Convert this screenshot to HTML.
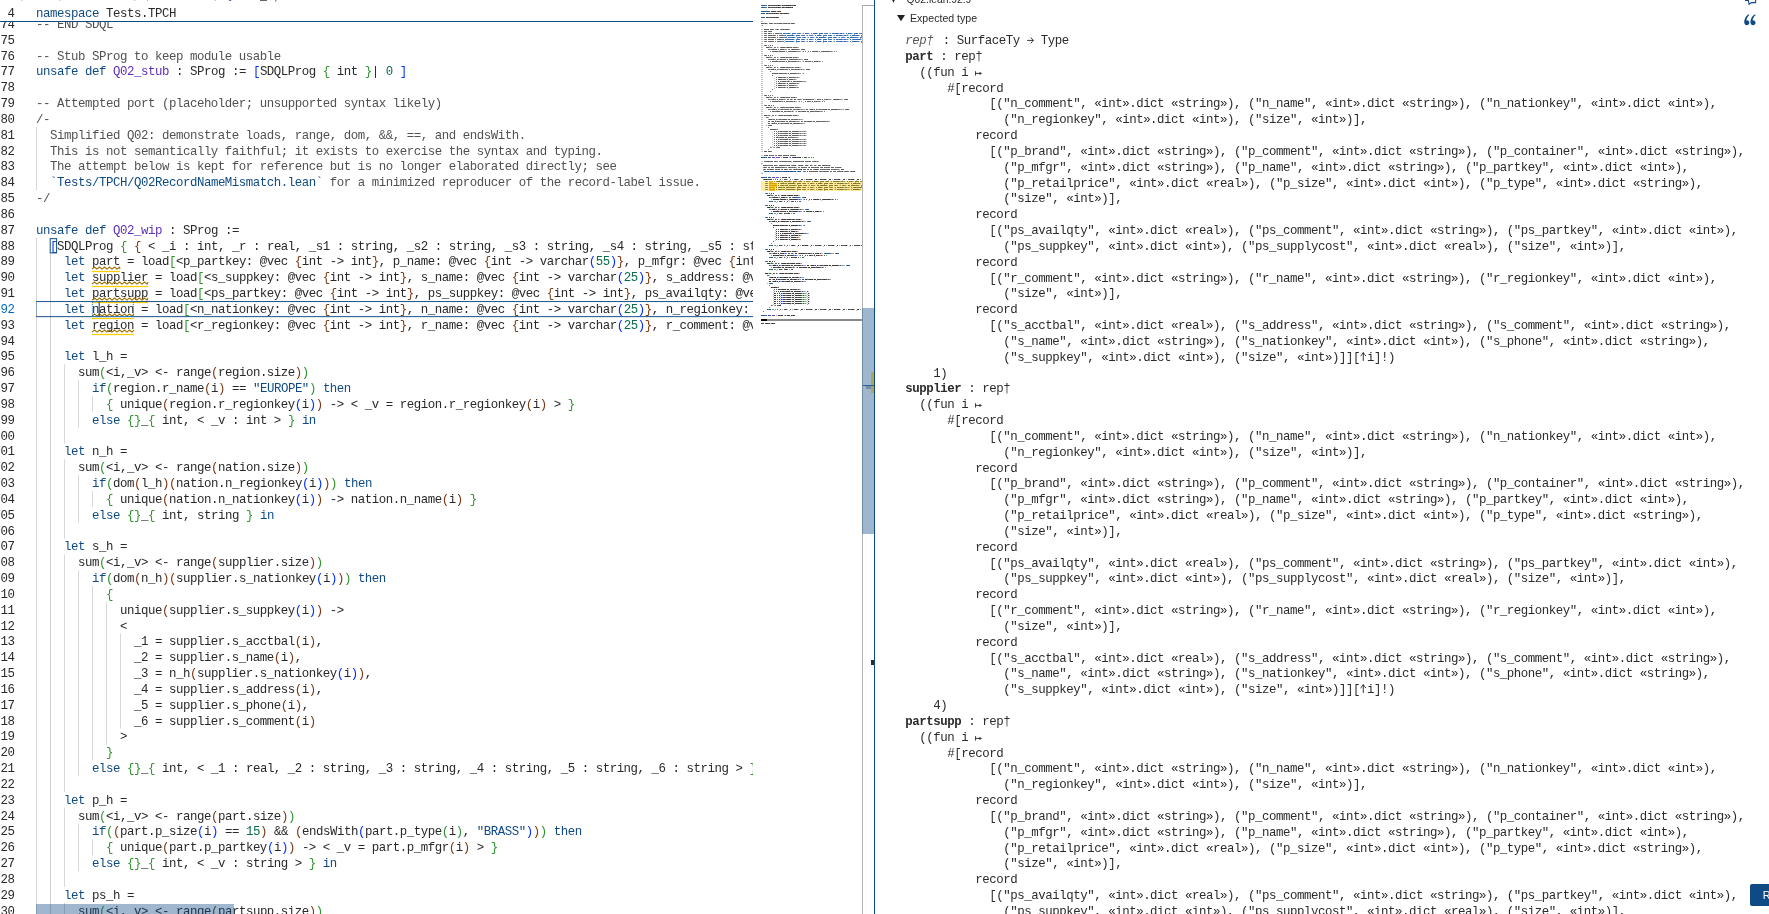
<!DOCTYPE html>
<html><head><meta charset="utf-8"><title>Q02.lean</title>
<style>
html,body{margin:0;padding:0;background:#fff;}
body{width:1769px;height:914px;overflow:hidden;position:relative;font-family:"Liberation Mono",monospace;color:#292929;}
#ed{position:absolute;left:0;top:0;width:752.5px;height:914px;overflow:hidden;will-change:transform;}
.l{position:absolute;left:36.0px;height:15.8333px;line-height:15.8333px;font-size:12.4px;letter-spacing:-0.4406px;white-space:pre;font-family:"Liberation Mono",monospace;color:#292929;}
.n{position:absolute;left:0.5px;height:15.8333px;line-height:15.8333px;font-size:12.4px;letter-spacing:-0.4406px;white-space:pre;color:#292929;}
.g{position:absolute;width:0.85px;background:#c6c6c6;}
.ga{position:absolute;width:0.85px;background:#8c8c8c;}
#info{position:absolute;left:876px;top:0;width:893px;height:914px;overflow:hidden;will-change:transform;}
.i{position:absolute;left:29.3px;height:15.8333px;line-height:15.8333px;font-size:12.4px;letter-spacing:-0.4406px;white-space:pre;color:#2b2b2b;}
.sq{position:absolute;overflow:visible;}
#mm{position:absolute;left:761px;top:5.2px;width:101px;height:330px;overflow:hidden;will-change:transform;}
#mmi{position:absolute;left:0;top:0;transform-origin:0 0;transform:scale(0.142857,0.126316);font-weight:bold;-webkit-text-stroke:1.5px;}
.m{height:15.8333px;line-height:15.8333px;font-size:11.6667px;white-space:pre;color:#000;}
#root{position:absolute;left:0;top:0;width:1769px;height:914px;overflow:hidden;}
</style></head><body><div id="root">

<div id="ed">
<div class="n" style="top:18.00px;color:#292929">74</div>
<div class="l" style="top:18.00px"><span style="color:#515151">-- END SDQL</span></div>
<div class="n" style="top:34.00px;color:#292929">75</div>
<div class="n" style="top:50.00px;color:#292929">76</div>
<div class="l" style="top:50.00px"><span style="color:#515151">-- Stub SProg to keep module usable</span></div>
<div class="n" style="top:65.00px;color:#292929">77</div>
<div class="l" style="top:65.00px"><span style="color:#0F4A85">unsafe def </span><span style="color:#5e2cbc">Q02_stub </span>: SProg := <span style="color:#0431FA">[</span>SDQLProg <span style="color:#319331">{ </span>int <span style="color:#319331">}</span>| <span style="color:#096d48">0 </span><span style="color:#0431FA">]</span></div>
<div class="n" style="top:81.00px;color:#292929">78</div>
<div class="n" style="top:97.00px;color:#292929">79</div>
<div class="l" style="top:97.00px"><span style="color:#515151">-- Attempted port (placeholder; unsupported syntax likely)</span></div>
<div class="n" style="top:113.00px;color:#292929">80</div>
<div class="l" style="top:113.00px"><span style="color:#515151">/-</span></div>
<div class="n" style="top:129.00px;color:#292929">81</div>
<div class="l" style="top:129.00px"><span style="color:#515151">  Simplified Q02: demonstrate loads, range, dom, &amp;&amp;, ==, and endsWith.</span></div>
<div class="n" style="top:145.00px;color:#292929">82</div>
<div class="l" style="top:145.00px"><span style="color:#515151">  This is not semantically faithful; it exists to exercise the syntax and typing.</span></div>
<div class="n" style="top:160.00px;color:#292929">83</div>
<div class="l" style="top:160.00px"><span style="color:#515151">  The attempt below is kept for reference but is no longer elaborated directly; see</span></div>
<div class="n" style="top:176.00px;color:#292929">84</div>
<div class="l" style="top:176.00px"><span style="color:#515151">  </span><span style="color:#0F4A85">`Tests/TPCH/Q02RecordNameMismatch.lean`</span><span style="color:#515151"> for a minimized reproducer of the record-label issue.</span></div>
<div class="n" style="top:192.00px;color:#292929">85</div>
<div class="l" style="top:192.00px"><span style="color:#515151">-/</span></div>
<div class="n" style="top:208.00px;color:#292929">86</div>
<div class="n" style="top:224.00px;color:#292929">87</div>
<div class="l" style="top:224.00px"><span style="color:#0F4A85">unsafe def </span><span style="color:#5e2cbc">Q02_wip </span>: SProg :=</div>
<div class="n" style="top:240.00px;color:#292929">88</div>
<div class="l" style="top:240.00px">  <span style="color:#0431FA">[</span>SDQLProg <span style="color:#319331">{ </span><span style="color:#7B3814">{ </span>&lt; _i : int, _r : real, _s1 : string, _s2 : string, _s3 : string, _s4 : string, _s5 : string, _s6 : string, _s7 : string, _s8 : string &gt; -&gt; bool <span style="color:#7B3814">} </span><span style="color:#319331">}</span>|</div>
<div class="n" style="top:255.00px;color:#292929">89</div>
<div class="l" style="top:255.00px">    <span style="color:#0F4A85">let </span>part = load<span style="color:#319331">[</span>&lt;p_partkey: @vec <span style="color:#7B3814">{</span>int -&gt; int<span style="color:#7B3814">}</span>, p_name: @vec <span style="color:#7B3814">{</span>int -&gt; varchar<span style="color:#0431FA">(</span><span style="color:#096d48">55</span><span style="color:#0431FA">)</span><span style="color:#7B3814">}</span>, p_mfgr: @vec <span style="color:#7B3814">{</span>int -&gt; varchar<span style="color:#0431FA">(</span><span style="color:#096d48">25</span><span style="color:#0431FA">)</span><span style="color:#7B3814">}</span>, p_brand: @vec <span style="color:#7B3814">{</span>int -&gt; varchar<span style="color:#0431FA">(</span><span style="color:#096d48">10</span><span style="color:#0431FA">)</span><span style="color:#7B3814">}</span>, p_type: @vec <span style="color:#7B3814">{</span>int -&gt; varchar<span style="color:#0431FA">(</span><span style="color:#096d48">25</span><span style="color:#0431FA">)</span><span style="color:#7B3814">}</span>, p_size: @vec <span style="color:#7B3814">{</span>int -&gt; int<span style="color:#7B3814">}</span>, p_container: @vec <span style="color:#7B3814">{</span>int -&gt; varchar<span style="color:#0431FA">(</span><span style="color:#096d48">10</span><span style="color:#0431FA">)</span><span style="color:#7B3814">}</span>, p_retailprice: @vec <span style="color:#7B3814">{</span>int -&gt; real<span style="color:#7B3814">}</span>, p_comment: @vec <span style="color:#7B3814">{</span>int -&gt; varchar<span style="color:#0431FA">(</span><span style="color:#096d48">23</span><span style="color:#0431FA">)</span><span style="color:#7B3814">}</span>, size: int&gt;<span style="color:#319331">](</span><span style="color:#0F4A85">"datasets/tpch/part.tbl"</span><span style="color:#319331">)</span></div>
<div class="n" style="top:271.00px;color:#292929">90</div>
<div class="l" style="top:271.00px">    <span style="color:#0F4A85">let </span>supplier = load<span style="color:#319331">[</span>&lt;s_suppkey: @vec <span style="color:#7B3814">{</span>int -&gt; int<span style="color:#7B3814">}</span>, s_name: @vec <span style="color:#7B3814">{</span>int -&gt; varchar<span style="color:#0431FA">(</span><span style="color:#096d48">25</span><span style="color:#0431FA">)</span><span style="color:#7B3814">}</span>, s_address: @vec <span style="color:#7B3814">{</span>int -&gt; varchar<span style="color:#0431FA">(</span><span style="color:#096d48">40</span><span style="color:#0431FA">)</span><span style="color:#7B3814">}</span>, s_nationkey: @vec <span style="color:#7B3814">{</span>int -&gt; int<span style="color:#7B3814">}</span>, s_phone: @vec <span style="color:#7B3814">{</span>int -&gt; varchar<span style="color:#0431FA">(</span><span style="color:#096d48">15</span><span style="color:#0431FA">)</span><span style="color:#7B3814">}</span>, s_acctbal: @vec <span style="color:#7B3814">{</span>int -&gt; real<span style="color:#7B3814">}</span>, s_comment: @vec <span style="color:#7B3814">{</span>int -&gt; varchar<span style="color:#0431FA">(</span><span style="color:#096d48">101</span><span style="color:#0431FA">)</span><span style="color:#7B3814">}</span>, size: int&gt;<span style="color:#319331">](</span><span style="color:#0F4A85">"datasets/tpch/supplier.tbl"</span><span style="color:#319331">)</span></div>
<div class="n" style="top:287.00px;color:#292929">91</div>
<div class="l" style="top:287.00px">    <span style="color:#0F4A85">let </span>partsupp = load<span style="color:#319331">[</span>&lt;ps_partkey: @vec <span style="color:#7B3814">{</span>int -&gt; int<span style="color:#7B3814">}</span>, ps_suppkey: @vec <span style="color:#7B3814">{</span>int -&gt; int<span style="color:#7B3814">}</span>, ps_availqty: @vec <span style="color:#7B3814">{</span>int -&gt; real<span style="color:#7B3814">}</span>, ps_supplycost: @vec <span style="color:#7B3814">{</span>int -&gt; real<span style="color:#7B3814">}</span>, ps_comment: @vec <span style="color:#7B3814">{</span>int -&gt; varchar<span style="color:#0431FA">(</span><span style="color:#096d48">199</span><span style="color:#0431FA">)</span><span style="color:#7B3814">}</span>, size: int&gt;<span style="color:#319331">](</span><span style="color:#0F4A85">"datasets/tpch/partsupp.tbl"</span><span style="color:#319331">)</span></div>
<div class="n" style="top:303.00px;color:#006BBD">92</div>
<div class="l" style="top:303.00px">    <span style="color:#0F4A85">let </span>nation = load<span style="color:#319331">[</span>&lt;n_nationkey: @vec <span style="color:#7B3814">{</span>int -&gt; int<span style="color:#7B3814">}</span>, n_name: @vec <span style="color:#7B3814">{</span>int -&gt; varchar<span style="color:#0431FA">(</span><span style="color:#096d48">25</span><span style="color:#0431FA">)</span><span style="color:#7B3814">}</span>, n_regionkey: @vec <span style="color:#7B3814">{</span>int -&gt; int<span style="color:#7B3814">}</span>, n_comment: @vec <span style="color:#7B3814">{</span>int -&gt; varchar<span style="color:#0431FA">(</span><span style="color:#096d48">152</span><span style="color:#0431FA">)</span><span style="color:#7B3814">}</span>, size: int&gt;<span style="color:#319331">](</span><span style="color:#0F4A85">"datasets/tpch/nation.tbl"</span><span style="color:#319331">)</span></div>
<div class="n" style="top:319.00px;color:#292929">93</div>
<div class="l" style="top:319.00px">    <span style="color:#0F4A85">let </span>region = load<span style="color:#319331">[</span>&lt;r_regionkey: @vec <span style="color:#7B3814">{</span>int -&gt; int<span style="color:#7B3814">}</span>, r_name: @vec <span style="color:#7B3814">{</span>int -&gt; varchar<span style="color:#0431FA">(</span><span style="color:#096d48">25</span><span style="color:#0431FA">)</span><span style="color:#7B3814">}</span>, r_comment: @vec <span style="color:#7B3814">{</span>int -&gt; varchar<span style="color:#0431FA">(</span><span style="color:#096d48">152</span><span style="color:#0431FA">)</span><span style="color:#7B3814">}</span>, size: int&gt;<span style="color:#319331">](</span><span style="color:#0F4A85">"datasets/tpch/region.tbl"</span><span style="color:#319331">)</span></div>
<div class="n" style="top:335.00px;color:#292929">94</div>
<div class="n" style="top:350.00px;color:#292929">95</div>
<div class="l" style="top:350.00px">    <span style="color:#0F4A85">let </span>l_h =</div>
<div class="n" style="top:366.00px;color:#292929">96</div>
<div class="l" style="top:366.00px">      sum<span style="color:#319331">(</span>&lt;i,_v&gt; &lt;- range<span style="color:#7B3814">(</span>region.size<span style="color:#7B3814">)</span><span style="color:#319331">)</span></div>
<div class="n" style="top:382.00px;color:#292929">97</div>
<div class="l" style="top:382.00px">        <span style="color:#0F4A85">if</span><span style="color:#319331">(</span>region.r_name<span style="color:#7B3814">(</span>i<span style="color:#7B3814">) </span>== <span style="color:#0F4A85">"EUROPE"</span><span style="color:#319331">) </span><span style="color:#0F4A85">then</span></div>
<div class="n" style="top:398.00px;color:#292929">98</div>
<div class="l" style="top:398.00px">          <span style="color:#319331">{ </span>unique<span style="color:#7B3814">(</span>region.r_regionkey<span style="color:#0431FA">(</span>i<span style="color:#0431FA">)</span><span style="color:#7B3814">) </span>-&gt; &lt; _v = region.r_regionkey<span style="color:#7B3814">(</span>i<span style="color:#7B3814">) </span>&gt; <span style="color:#319331">}</span></div>
<div class="n" style="top:414.00px;color:#292929">99</div>
<div class="l" style="top:414.00px">        <span style="color:#0F4A85">else </span><span style="color:#319331">{}</span>_<span style="color:#319331">{ </span>int, &lt; _v : int &gt; <span style="color:#319331">} </span><span style="color:#0F4A85">in</span></div>
<div class="n" style="top:430.00px;color:#292929">00</div>
<div class="n" style="top:445.00px;color:#292929">01</div>
<div class="l" style="top:445.00px">    <span style="color:#0F4A85">let </span>n_h =</div>
<div class="n" style="top:461.00px;color:#292929">02</div>
<div class="l" style="top:461.00px">      sum<span style="color:#319331">(</span>&lt;i,_v&gt; &lt;- range<span style="color:#7B3814">(</span>nation.size<span style="color:#7B3814">)</span><span style="color:#319331">)</span></div>
<div class="n" style="top:477.00px;color:#292929">03</div>
<div class="l" style="top:477.00px">        <span style="color:#0F4A85">if</span><span style="color:#319331">(</span>dom<span style="color:#7B3814">(</span>l_h<span style="color:#7B3814">)(</span>nation.n_regionkey<span style="color:#0431FA">(</span>i<span style="color:#0431FA">)</span><span style="color:#7B3814">)</span><span style="color:#319331">) </span><span style="color:#0F4A85">then</span></div>
<div class="n" style="top:493.00px;color:#292929">04</div>
<div class="l" style="top:493.00px">          <span style="color:#319331">{ </span>unique<span style="color:#7B3814">(</span>nation.n_nationkey<span style="color:#0431FA">(</span>i<span style="color:#0431FA">)</span><span style="color:#7B3814">) </span>-&gt; nation.n_name<span style="color:#7B3814">(</span>i<span style="color:#7B3814">) </span><span style="color:#319331">}</span></div>
<div class="n" style="top:509.00px;color:#292929">05</div>
<div class="l" style="top:509.00px">        <span style="color:#0F4A85">else </span><span style="color:#319331">{}</span>_<span style="color:#319331">{ </span>int, string <span style="color:#319331">} </span><span style="color:#0F4A85">in</span></div>
<div class="n" style="top:525.00px;color:#292929">06</div>
<div class="n" style="top:540.00px;color:#292929">07</div>
<div class="l" style="top:540.00px">    <span style="color:#0F4A85">let </span>s_h =</div>
<div class="n" style="top:556.00px;color:#292929">08</div>
<div class="l" style="top:556.00px">      sum<span style="color:#319331">(</span>&lt;i,_v&gt; &lt;- range<span style="color:#7B3814">(</span>supplier.size<span style="color:#7B3814">)</span><span style="color:#319331">)</span></div>
<div class="n" style="top:572.00px;color:#292929">09</div>
<div class="l" style="top:572.00px">        <span style="color:#0F4A85">if</span><span style="color:#319331">(</span>dom<span style="color:#7B3814">(</span>n_h<span style="color:#7B3814">)(</span>supplier.s_nationkey<span style="color:#0431FA">(</span>i<span style="color:#0431FA">)</span><span style="color:#7B3814">)</span><span style="color:#319331">) </span><span style="color:#0F4A85">then</span></div>
<div class="n" style="top:588.00px;color:#292929">10</div>
<div class="l" style="top:588.00px">          <span style="color:#319331">{</span></div>
<div class="n" style="top:604.00px;color:#292929">11</div>
<div class="l" style="top:604.00px">            unique<span style="color:#7B3814">(</span>supplier.s_suppkey<span style="color:#0431FA">(</span>i<span style="color:#0431FA">)</span><span style="color:#7B3814">) </span>-&gt;</div>
<div class="n" style="top:620.00px;color:#292929">12</div>
<div class="l" style="top:620.00px">            &lt;</div>
<div class="n" style="top:635.00px;color:#292929">13</div>
<div class="l" style="top:635.00px">              _1 = supplier.s_acctbal<span style="color:#7B3814">(</span>i<span style="color:#7B3814">)</span>,</div>
<div class="n" style="top:651.00px;color:#292929">14</div>
<div class="l" style="top:651.00px">              _2 = supplier.s_name<span style="color:#7B3814">(</span>i<span style="color:#7B3814">)</span>,</div>
<div class="n" style="top:667.00px;color:#292929">15</div>
<div class="l" style="top:667.00px">              _3 = n_h<span style="color:#7B3814">(</span>supplier.s_nationkey<span style="color:#0431FA">(</span>i<span style="color:#0431FA">)</span><span style="color:#7B3814">)</span>,</div>
<div class="n" style="top:683.00px;color:#292929">16</div>
<div class="l" style="top:683.00px">              _4 = supplier.s_address<span style="color:#7B3814">(</span>i<span style="color:#7B3814">)</span>,</div>
<div class="n" style="top:699.00px;color:#292929">17</div>
<div class="l" style="top:699.00px">              _5 = supplier.s_phone<span style="color:#7B3814">(</span>i<span style="color:#7B3814">)</span>,</div>
<div class="n" style="top:715.00px;color:#292929">18</div>
<div class="l" style="top:715.00px">              _6 = supplier.s_comment<span style="color:#7B3814">(</span>i<span style="color:#7B3814">)</span></div>
<div class="n" style="top:730.00px;color:#292929">19</div>
<div class="l" style="top:730.00px">            &gt;</div>
<div class="n" style="top:746.00px;color:#292929">20</div>
<div class="l" style="top:746.00px">          <span style="color:#319331">}</span></div>
<div class="n" style="top:762.00px;color:#292929">21</div>
<div class="l" style="top:762.00px">        <span style="color:#0F4A85">else </span><span style="color:#319331">{}</span>_<span style="color:#319331">{ </span>int, &lt; _1 : real, _2 : string, _3 : string, _4 : string, _5 : string, _6 : string &gt; <span style="color:#319331">} </span><span style="color:#0F4A85">in</span></div>
<div class="n" style="top:778.00px;color:#292929">22</div>
<div class="n" style="top:794.00px;color:#292929">23</div>
<div class="l" style="top:794.00px">    <span style="color:#0F4A85">let </span>p_h =</div>
<div class="n" style="top:810.00px;color:#292929">24</div>
<div class="l" style="top:810.00px">      sum<span style="color:#319331">(</span>&lt;i,_v&gt; &lt;- range<span style="color:#7B3814">(</span>part.size<span style="color:#7B3814">)</span><span style="color:#319331">)</span></div>
<div class="n" style="top:825.00px;color:#292929">25</div>
<div class="l" style="top:825.00px">        <span style="color:#0F4A85">if</span><span style="color:#319331">(</span><span style="color:#7B3814">(</span>part.p_size<span style="color:#0431FA">(</span>i<span style="color:#0431FA">) </span>== <span style="color:#096d48">15</span><span style="color:#7B3814">) </span>&amp;&amp; <span style="color:#7B3814">(</span>endsWith<span style="color:#0431FA">(</span>part.p_type<span style="color:#319331">(</span>i<span style="color:#319331">)</span>, <span style="color:#0F4A85">"BRASS"</span><span style="color:#0431FA">)</span><span style="color:#7B3814">)</span><span style="color:#319331">) </span><span style="color:#0F4A85">then</span></div>
<div class="n" style="top:841.00px;color:#292929">26</div>
<div class="l" style="top:841.00px">          <span style="color:#319331">{ </span>unique<span style="color:#7B3814">(</span>part.p_partkey<span style="color:#0431FA">(</span>i<span style="color:#0431FA">)</span><span style="color:#7B3814">) </span>-&gt; &lt; _v = part.p_mfgr<span style="color:#7B3814">(</span>i<span style="color:#7B3814">) </span>&gt; <span style="color:#319331">}</span></div>
<div class="n" style="top:857.00px;color:#292929">27</div>
<div class="l" style="top:857.00px">        <span style="color:#0F4A85">else </span><span style="color:#319331">{}</span>_<span style="color:#319331">{ </span>int, &lt; _v : string &gt; <span style="color:#319331">} </span><span style="color:#0F4A85">in</span></div>
<div class="n" style="top:873.00px;color:#292929">28</div>
<div class="n" style="top:889.00px;color:#292929">29</div>
<div class="l" style="top:889.00px">    <span style="color:#0F4A85">let </span>ps_h =</div>
<div class="n" style="top:905.00px;color:#292929">30</div>
<div class="l" style="top:905.00px">      sum<span style="color:#319331">(</span>&lt;i,_v&gt; &lt;- range<span style="color:#7B3814">(</span>partsupp.size<span style="color:#7B3814">)</span><span style="color:#319331">)</span></div>
<div class="n" style="top:920.00px;color:#292929">31</div>
<div class="l" style="top:920.00px">        <span style="color:#0F4A85">if</span><span style="color:#319331">(</span><span style="color:#7B3814">(</span>dom<span style="color:#0431FA">(</span>p_h<span style="color:#0431FA">)(</span>partsupp.ps_partkey<span style="color:#319331">(</span>i<span style="color:#319331">)</span><span style="color:#0431FA">)</span><span style="color:#7B3814">) </span>&amp;&amp; <span style="color:#7B3814">(</span>dom<span style="color:#0431FA">(</span>s_h<span style="color:#0431FA">)(</span>partsupp.ps_suppkey<span style="color:#319331">(</span>i<span style="color:#319331">)</span><span style="color:#0431FA">)</span><span style="color:#7B3814">)</span><span style="color:#319331">) </span><span style="color:#0F4A85">then</span></div>
<svg class="sq" style="left:92.00px;top:266.60px" width="28.0" height="7" viewBox="0 0 28.0 7"><path d="M0 2.2 L2.50 0.00 L5.00 2.20 L7.50 0.00 L10.00 2.20 L12.50 0.00 L15.00 2.20 L17.50 0.00 L20.00 2.20 L22.50 0.00 L25.00 2.20 L27.50 0.00 L28.00 2.20" fill="none" stroke="#a3720a" stroke-width="1.1" stroke-linejoin="round"/><rect x="0" y="3.9" width="28.0" height="1.25" fill="#ffcc00"/></svg>
<svg class="sq" style="left:92.00px;top:282.43px" width="56.0" height="7" viewBox="0 0 56.0 7"><path d="M0 2.2 L2.50 0.00 L5.00 2.20 L7.50 0.00 L10.00 2.20 L12.50 0.00 L15.00 2.20 L17.50 0.00 L20.00 2.20 L22.50 0.00 L25.00 2.20 L27.50 0.00 L30.00 2.20 L32.50 0.00 L35.00 2.20 L37.50 0.00 L40.00 2.20 L42.50 0.00 L45.00 2.20 L47.50 0.00 L50.00 2.20 L52.50 0.00 L55.00 2.20 L56.00 0.00" fill="none" stroke="#a3720a" stroke-width="1.1" stroke-linejoin="round"/><rect x="0" y="3.9" width="56.0" height="1.25" fill="#ffcc00"/></svg>
<svg class="sq" style="left:92.00px;top:298.27px" width="56.0" height="7" viewBox="0 0 56.0 7"><path d="M0 2.2 L2.50 0.00 L5.00 2.20 L7.50 0.00 L10.00 2.20 L12.50 0.00 L15.00 2.20 L17.50 0.00 L20.00 2.20 L22.50 0.00 L25.00 2.20 L27.50 0.00 L30.00 2.20 L32.50 0.00 L35.00 2.20 L37.50 0.00 L40.00 2.20 L42.50 0.00 L45.00 2.20 L47.50 0.00 L50.00 2.20 L52.50 0.00 L55.00 2.20 L56.00 0.00" fill="none" stroke="#a3720a" stroke-width="1.1" stroke-linejoin="round"/><rect x="0" y="3.9" width="56.0" height="1.25" fill="#ffcc00"/></svg>
<svg class="sq" style="left:92.00px;top:314.10px" width="42.0" height="7" viewBox="0 0 42.0 7"><path d="M0 2.2 L2.50 0.00 L5.00 2.20 L7.50 0.00 L10.00 2.20 L12.50 0.00 L15.00 2.20 L17.50 0.00 L20.00 2.20 L22.50 0.00 L25.00 2.20 L27.50 0.00 L30.00 2.20 L32.50 0.00 L35.00 2.20 L37.50 0.00 L40.00 2.20 L42.00 0.00" fill="none" stroke="#a3720a" stroke-width="1.1" stroke-linejoin="round"/><rect x="0" y="3.9" width="42.0" height="1.25" fill="#ffcc00"/></svg>
<svg class="sq" style="left:92.00px;top:329.93px" width="42.0" height="7" viewBox="0 0 42.0 7"><path d="M0 2.2 L2.50 0.00 L5.00 2.20 L7.50 0.00 L10.00 2.20 L12.50 0.00 L15.00 2.20 L17.50 0.00 L20.00 2.20 L22.50 0.00 L25.00 2.20 L27.50 0.00 L30.00 2.20 L32.50 0.00 L35.00 2.20 L37.50 0.00 L40.00 2.20 L42.00 0.00" fill="none" stroke="#a3720a" stroke-width="1.1" stroke-linejoin="round"/><rect x="0" y="3.9" width="42.0" height="1.25" fill="#ffcc00"/></svg>
<svg style="position:absolute;left:0;top:0" width="753" height="914" viewBox="0 0 753 914"><rect x="36.05" y="126.93" width="0.8" height="63.33" fill="#cdcdcd"/><rect x="36.05" y="237.77" width="0.8" height="696.67" fill="#cdcdcd"/><rect x="50.05" y="253.60" width="0.8" height="680.83" fill="#c2c2c2"/><rect x="64.05" y="364.43" width="0.8" height="79.17" fill="#cdcdcd"/><rect x="64.05" y="459.43" width="0.8" height="79.17" fill="#cdcdcd"/><rect x="64.05" y="554.43" width="0.8" height="237.50" fill="#cdcdcd"/><rect x="64.05" y="807.76" width="0.8" height="79.17" fill="#cdcdcd"/><rect x="64.05" y="902.76" width="0.8" height="31.67" fill="#cdcdcd"/><rect x="78.05" y="380.27" width="0.8" height="47.50" fill="#cdcdcd"/><rect x="78.05" y="475.27" width="0.8" height="47.50" fill="#cdcdcd"/><rect x="78.05" y="570.27" width="0.8" height="205.83" fill="#cdcdcd"/><rect x="78.05" y="823.60" width="0.8" height="47.50" fill="#cdcdcd"/><rect x="78.05" y="918.60" width="0.8" height="15.83" fill="#cdcdcd"/><rect x="92.05" y="396.10" width="0.8" height="15.83" fill="#cdcdcd"/><rect x="92.05" y="491.10" width="0.8" height="15.83" fill="#cdcdcd"/><rect x="92.05" y="586.10" width="0.8" height="174.17" fill="#cdcdcd"/><rect x="92.05" y="839.43" width="0.8" height="15.83" fill="#cdcdcd"/><rect x="106.05" y="601.93" width="0.8" height="142.50" fill="#cdcdcd"/><rect x="120.05" y="633.60" width="0.8" height="95.00" fill="#cdcdcd"/><rect x="36.2" y="301.10" width="720" height="0.95" fill="#0F4A85"/><rect x="36.2" y="316.18" width="720" height="0.95" fill="#0F4A85"/><rect x="36.25" y="301.20" width="0.45" height="15.63" fill="#0F4A85" opacity="0.8"/><path d="M92.35 302.00V316.33" fill="none" stroke="#006BBD" stroke-width="0.95" stroke-dasharray="1.05 1.05"/><path d="M133.25 302.00V316.33" fill="none" stroke="#006BBD" stroke-width="0.95" stroke-dasharray="1.05 1.05"/><path d="M92.35 301.60H133.25" fill="none" stroke="#2a8be0" stroke-width="0.9" stroke-dasharray="1.05 1.05"/><path d="M92.35 316.48H133.25" fill="none" stroke="#2a8be0" stroke-width="0.9" stroke-dasharray="1.05 1.05"/><rect x="98.65" y="301.40" width="1.1" height="15.23" fill="#0F4A85"/><rect x="50.20" y="238.67" width="6.40" height="14.23" fill="none" stroke="#0F4A85" stroke-width="1.0"/></svg>
<div style="position:absolute;left:0;top:0;width:752.5px;height:21.1px;background:#fff;border-bottom:0.9px solid #0F4A85"></div>
<div class="n" style="top:7px;left:7.5px">4</div>
<div class="l" style="top:7px"><span style="color:#0F4A85">namespace </span>Tests.TPCH</div>
<svg style="position:absolute;left:0;top:0" width="400" height="3" viewBox="0 0 400 3"><rect x="229" y="0" width="2.2" height="1" fill="#5e2cbc" opacity="0.8"/><rect x="260" y="0" width="7" height="0.9" fill="#292929" opacity="0.8"/><rect x="275.4" y="0" width="0.9" height="1.6" fill="#292929" opacity="0.8"/><rect x="21.4" y="0" width="0.8" height="0.8" fill="#888"/><rect x="59.4" y="0" width="0.8" height="0.8" fill="#888"/><rect x="134.4" y="0" width="0.8" height="0.8" fill="#888"/><rect x="147" y="0" width="0.8" height="0.8" fill="#888"/><rect x="214.8" y="0" width="0.8" height="0.8" fill="#888"/></svg>
<div style="position:absolute;left:36.1px;top:904px;width:197.8px;height:10px;background:rgba(15,74,133,0.4)"></div>
</div>
<div id="mm"><div id="mmi">
<div class="m"><span style="color:#0F4A85">import </span><span style="color:#292929">PartIiProject.SyntaxSDQLProg</span></div>
<div class="m"><span style="color:#0F4A85">import </span><span style="color:#292929">PartIiProject.SurfaceCore</span></div>
<div class="m"></div>
<div class="m"><span style="color:#0F4A85">namespace </span><span style="color:#292929">Tests.TPCH</span></div>
<div class="m"><span style="color:#0F4A85">open </span><span style="color:#292929">PartIiProject.SurfaceTy</span></div>
<div class="m"></div>
<div class="m"><span style="color:#0F4A85">open </span><span style="color:#292929">PartIiProject</span></div>
<div class="m"></div>
<div class="m"><span style="color:#515151">/-</span></div>
<div class="m"><span style="color:#515151">Source: sdql-rs/progs/tpch/q2.sdql</span></div>
<div class="m"><span style="color:#515151">-/</span></div>
<div class="m"></div>
<div class="m"><span style="color:#515151">-- BEGIN SDQL (for reference)</span></div>
<div class="m"><span style="color:#515151">-- Q02 TPCH</span></div>
<div class="m"><span style="color:#515151">-- let part = load</span><span style="color:#1e5aa8">[&lt;p_partkey: @vec {int -&gt; int}, p_name: @vec {int -&gt; varchar(55)}, p_mfgr: @vec {int -&gt; varchar(25)}, p_brand: @vec {int -</span></div>
<div class="m"><span style="color:#515151">-- let supplier = load</span><span style="color:#1e5aa8">[&lt;s_suppkey: @vec {int -&gt; int}, s_name: @vec {int -&gt; varchar(25)}, s_address: @vec {int -&gt; varchar(40)}, s_nationkey: </span></div>
<div class="m"><span style="color:#515151">-- let partsupp = load</span><span style="color:#1e5aa8">[&lt;ps_partkey: @vec {int -&gt; int}, ps_suppkey: @vec {int -&gt; int}, ps_availqty: @vec {int -&gt; real}, ps_supplycost: @vec {</span></div>
<div class="m"><span style="color:#515151">-- let nation = load</span><span style="color:#1e5aa8">[&lt;n_nationkey: @vec {int -&gt; int}, n_name: @vec {int -&gt; varchar(25)}, n_regionkey: @vec {int -&gt; int}, n_comment: @vec {in</span></div>
<div class="m"><span style="color:#515151">-- let region = load</span><span style="color:#1e5aa8">[&lt;r_regionkey: @vec {int -&gt; int}, r_name: @vec {int -&gt; varchar(25)}, r_comment: @vec {int -&gt; varchar(152)}, size: int&gt;](</span></div>
<div class="m"><span style="color:#515151">--</span></div>
<div class="m"><span style="color:#515151">-- let l_h =</span></div>
<div class="m"><span style="color:#515151">--   sum(&lt;i,_v&gt; &lt;- range(region.size))</span></div>
<div class="m"><span style="color:#515151">--     if(region.r_name(i) == "EUROPE") then</span></div>
<div class="m"><span style="color:#515151">--       { unique(region.r_regionkey(i)) -&gt; &lt; _v = region.r_regionkey(i) &gt; }</span></div>
<div class="m"><span style="color:#515151">--</span></div>
<div class="m"><span style="color:#515151">-- let n_h =</span></div>
<div class="m"><span style="color:#515151">--   sum(&lt;i,_v&gt; &lt;- range(nation.size))</span></div>
<div class="m"><span style="color:#515151">--     if(dom(l_h)(nation.n_regionkey(i))) then</span></div>
<div class="m"><span style="color:#515151">--       { unique(nation.n_nationkey(i)) -&gt; nation.n_name(i) }</span></div>
<div class="m"><span style="color:#515151">--</span></div>
<div class="m"><span style="color:#515151">-- let s_h =</span></div>
<div class="m"><span style="color:#515151">--   sum(&lt;i,_v&gt; &lt;- range(supplier.size))</span></div>
<div class="m"><span style="color:#515151">--     if(dom(n_h)(supplier.s_nationkey(i))) then</span></div>
<div class="m"><span style="color:#515151">--       {</span></div>
<div class="m"><span style="color:#515151">--         unique(supplier.s_suppkey(i)) -&gt;</span></div>
<div class="m"><span style="color:#515151">--         &lt;</span></div>
<div class="m"><span style="color:#515151">--           _ = supplier.s_acctbal(i),</span></div>
<div class="m"><span style="color:#515151">--           _ = supplier.s_name(i),</span></div>
<div class="m"><span style="color:#515151">--           _ = n_h(supplier.s_nationkey(i)),</span></div>
<div class="m"><span style="color:#515151">--           _ = supplier.s_address(i),</span></div>
<div class="m"><span style="color:#515151">--           _ = supplier.s_phone(i),</span></div>
<div class="m"><span style="color:#515151">--           _ = supplier.s_comment(i)</span></div>
<div class="m"><span style="color:#515151">--         &gt;</span></div>
<div class="m"><span style="color:#515151">--       }</span></div>
<div class="m"><span style="color:#515151">--</span></div>
<div class="m"><span style="color:#515151">-- let p_h =</span></div>
<div class="m"><span style="color:#515151">--   sum(&lt;i,_v&gt; &lt;- range(part.size))</span></div>
<div class="m"><span style="color:#515151">--     if((part.p_size(i) == 15) &amp;&amp; (ext(`StrEndsWith`, part.p_type(i), "BRASS"))) then</span></div>
<div class="m"><span style="color:#515151">--       { unique(part.p_partkey(i)) -&gt; &lt; _ = part.p_mfgr(i) &gt; }</span></div>
<div class="m"><span style="color:#515151">--</span></div>
<div class="m"><span style="color:#515151">-- let ps_h =</span></div>
<div class="m"><span style="color:#515151">--   sum(&lt;i,_v&gt; &lt;- range(partsupp.size))</span></div>
<div class="m"><span style="color:#515151">--     if((dom(p_h)(partsupp.ps_partkey(i))) &amp;&amp; (dom(s_h)(partsupp.ps_suppkey(i)))) then</span></div>
<div class="m"><span style="color:#515151">--       { partsupp.ps_partkey(i) -&gt; partsupp.ps_supplycost(i) }</span></div>
<div class="m"><span style="color:#515151">--</span></div>
<div class="m"><span style="color:#515151">-- sum(&lt;i,_v&gt; &lt;- range(partsupp.size))</span></div>
<div class="m"><span style="color:#515151">--   if(</span></div>
<div class="m"><span style="color:#515151">--     (dom(ps_h)(partsupp.ps_partkey(i)))</span></div>
<div class="m"><span style="color:#515151">--     &amp;&amp; (ps_h(partsupp.ps_partkey(i)) == partsupp.ps_supplycost(i))</span></div>
<div class="m"><span style="color:#515151">--     &amp;&amp; (dom(s_h)(partsupp.ps_suppkey(i)))</span></div>
<div class="m"><span style="color:#515151">--   ) then</span></div>
<div class="m"><span style="color:#515151">--     {</span></div>
<div class="m"><span style="color:#515151">--       unique(&lt;</span></div>
<div class="m"><span style="color:#515151">--         _ = s_h(partsupp.ps_suppkey(i))(0),</span></div>
<div class="m"><span style="color:#515151">--         _ = s_h(partsupp.ps_suppkey(i))(1),</span></div>
<div class="m"><span style="color:#515151">--         _ = s_h(partsupp.ps_suppkey(i))(2),</span></div>
<div class="m"><span style="color:#515151">--         _ = partsupp.ps_partkey(i),</span></div>
<div class="m"><span style="color:#515151">--         _ = p_h(partsupp.ps_partkey(i))(0),</span></div>
<div class="m"><span style="color:#515151">--         _ = s_h(partsupp.ps_suppkey(i))(3),</span></div>
<div class="m"><span style="color:#515151">--         _ = s_h(partsupp.ps_suppkey(i))(4),</span></div>
<div class="m"><span style="color:#515151">--         _ = s_h(partsupp.ps_suppkey(i))(5)</span></div>
<div class="m"><span style="color:#515151">--       &gt;) -&gt; true</span></div>
<div class="m"><span style="color:#515151">--     }</span></div>
<div class="m"><span style="color:#515151">-- END SDQL</span></div>
<div class="m"></div>
<div class="m"><span style="color:#515151">-- Stub SProg to keep module usable</span></div>
<div class="m"><span style="color:#0F4A85">unsafe def </span><span style="color:#5e2cbc">Q02_stub </span><span style="color:#292929">: SProg := </span><span style="color:#0431FA">[</span><span style="color:#292929">SDQLProg </span><span style="color:#319331">{ </span><span style="color:#292929">int </span><span style="color:#319331">}</span><span style="color:#292929">| </span><span style="color:#096d48">0 </span><span style="color:#0431FA">]</span></div>
<div class="m"></div>
<div class="m"><span style="color:#515151">-- Attempted port (placeholder; unsupported syntax likely)</span></div>
<div class="m"><span style="color:#515151">/-</span></div>
<div class="m"><span style="color:#515151">  Simplified Q02: demonstrate loads, range, dom, &amp;&amp;, ==, and endsWith.</span></div>
<div class="m"><span style="color:#515151">  This is not semantically faithful; it exists to exercise the syntax and typing.</span></div>
<div class="m"><span style="color:#515151">  The attempt below is kept for reference but is no longer elaborated directly; see</span></div>
<div class="m"><span style="color:#515151">  </span><span style="color:#0F4A85">`Tests/TPCH/Q02RecordNameMismatch.lean`</span><span style="color:#515151"> for a minimized reproducer of the record-label issue.</span></div>
<div class="m"><span style="color:#515151">-/</span></div>
<div class="m"></div>
<div class="m"><span style="color:#0F4A85">unsafe def </span><span style="color:#5e2cbc">Q02_wip </span><span style="color:#292929">: SProg :=</span></div>
<div class="m"><span style="color:#292929">  </span><span style="color:#0431FA">[</span><span style="color:#292929">SDQLProg </span><span style="color:#319331">{ </span><span style="color:#7B3814">{ </span><span style="color:#292929">&lt; _i : int, _r : real, _s1 : string, _s2 : string, _s3 : string, _s4 : string, _s5 : string, _s6 : string, _s7 : string, _s8</span></div>
<div class="m"><span style="color:#292929">    </span><span style="color:#0F4A85">let </span><span style="color:#292929">part = load</span><span style="color:#319331">[</span><span style="color:#292929">&lt;p_partkey: @vec </span><span style="color:#7B3814">{</span><span style="color:#292929">int -&gt; int</span><span style="color:#7B3814">}</span><span style="color:#292929">, p_name: @vec </span><span style="color:#7B3814">{</span><span style="color:#292929">int -&gt; varchar</span><span style="color:#0431FA">(</span><span style="color:#096d48">55</span><span style="color:#0431FA">)</span><span style="color:#7B3814">}</span><span style="color:#292929">, p_mfgr: @vec </span><span style="color:#7B3814">{</span><span style="color:#292929">int -&gt; varchar</span><span style="color:#0431FA">(</span><span style="color:#096d48">25</span><span style="color:#0431FA">)</span><span style="color:#7B3814">}</span><span style="color:#292929">, p_brand: @vec </span><span style="color:#7B3814">{</span><span style="color:#292929">int </span></div>
<div class="m"><span style="color:#292929">    </span><span style="color:#0F4A85">let </span><span style="color:#292929">supplier = load</span><span style="color:#319331">[</span><span style="color:#292929">&lt;s_suppkey: @vec </span><span style="color:#7B3814">{</span><span style="color:#292929">int -&gt; int</span><span style="color:#7B3814">}</span><span style="color:#292929">, s_name: @vec </span><span style="color:#7B3814">{</span><span style="color:#292929">int -&gt; varchar</span><span style="color:#0431FA">(</span><span style="color:#096d48">25</span><span style="color:#0431FA">)</span><span style="color:#7B3814">}</span><span style="color:#292929">, s_address: @vec </span><span style="color:#7B3814">{</span><span style="color:#292929">int -&gt; varchar</span><span style="color:#0431FA">(</span><span style="color:#096d48">40</span><span style="color:#0431FA">)</span><span style="color:#7B3814">}</span><span style="color:#292929">, s_nationkey:</span></div>
<div class="m"><span style="color:#292929">    </span><span style="color:#0F4A85">let </span><span style="color:#292929">partsupp = load</span><span style="color:#319331">[</span><span style="color:#292929">&lt;ps_partkey: @vec </span><span style="color:#7B3814">{</span><span style="color:#292929">int -&gt; int</span><span style="color:#7B3814">}</span><span style="color:#292929">, ps_suppkey: @vec </span><span style="color:#7B3814">{</span><span style="color:#292929">int -&gt; int</span><span style="color:#7B3814">}</span><span style="color:#292929">, ps_availqty: @vec </span><span style="color:#7B3814">{</span><span style="color:#292929">int -&gt; real</span><span style="color:#7B3814">}</span><span style="color:#292929">, ps_supplycost: @vec </span><span style="color:#7B3814"></span></div>
<div class="m"><span style="color:#292929">    </span><span style="color:#0F4A85">let </span><span style="color:#292929">nation = load</span><span style="color:#319331">[</span><span style="color:#292929">&lt;n_nationkey: @vec </span><span style="color:#7B3814">{</span><span style="color:#292929">int -&gt; int</span><span style="color:#7B3814">}</span><span style="color:#292929">, n_name: @vec </span><span style="color:#7B3814">{</span><span style="color:#292929">int -&gt; varchar</span><span style="color:#0431FA">(</span><span style="color:#096d48">25</span><span style="color:#0431FA">)</span><span style="color:#7B3814">}</span><span style="color:#292929">, n_regionkey: @vec </span><span style="color:#7B3814">{</span><span style="color:#292929">int -&gt; int</span><span style="color:#7B3814">}</span><span style="color:#292929">, n_comment: @vec </span><span style="color:#7B3814">{</span><span style="color:#292929">i</span></div>
<div class="m"><span style="color:#292929">    </span><span style="color:#0F4A85">let </span><span style="color:#292929">region = load</span><span style="color:#319331">[</span><span style="color:#292929">&lt;r_regionkey: @vec </span><span style="color:#7B3814">{</span><span style="color:#292929">int -&gt; int</span><span style="color:#7B3814">}</span><span style="color:#292929">, r_name: @vec </span><span style="color:#7B3814">{</span><span style="color:#292929">int -&gt; varchar</span><span style="color:#0431FA">(</span><span style="color:#096d48">25</span><span style="color:#0431FA">)</span><span style="color:#7B3814">}</span><span style="color:#292929">, r_comment: @vec </span><span style="color:#7B3814">{</span><span style="color:#292929">int -&gt; varchar</span><span style="color:#0431FA">(</span><span style="color:#096d48">152</span><span style="color:#0431FA">)</span><span style="color:#7B3814">}</span><span style="color:#292929">, size: int&gt;</span><span style="color:#319331">]</span></div>
<div class="m"></div>
<div class="m"><span style="color:#292929">    </span><span style="color:#0F4A85">let </span><span style="color:#292929">l_h =</span></div>
<div class="m"><span style="color:#292929">      sum</span><span style="color:#319331">(</span><span style="color:#292929">&lt;i,_v&gt; &lt;- range</span><span style="color:#7B3814">(</span><span style="color:#292929">region.size</span><span style="color:#7B3814">)</span><span style="color:#319331">)</span></div>
<div class="m"><span style="color:#292929">        </span><span style="color:#0F4A85">if</span><span style="color:#319331">(</span><span style="color:#292929">region.r_name</span><span style="color:#7B3814">(</span><span style="color:#292929">i</span><span style="color:#7B3814">) </span><span style="color:#292929">== </span><span style="color:#0F4A85">"EUROPE"</span><span style="color:#319331">) </span><span style="color:#0F4A85">then</span></div>
<div class="m"><span style="color:#292929">          </span><span style="color:#319331">{ </span><span style="color:#292929">unique</span><span style="color:#7B3814">(</span><span style="color:#292929">region.r_regionkey</span><span style="color:#0431FA">(</span><span style="color:#292929">i</span><span style="color:#0431FA">)</span><span style="color:#7B3814">) </span><span style="color:#292929">-&gt; &lt; _v = region.r_regionkey</span><span style="color:#7B3814">(</span><span style="color:#292929">i</span><span style="color:#7B3814">) </span><span style="color:#292929">&gt; </span><span style="color:#319331">}</span></div>
<div class="m"><span style="color:#292929">        </span><span style="color:#0F4A85">else </span><span style="color:#319331">{}</span><span style="color:#292929">_</span><span style="color:#319331">{ </span><span style="color:#292929">int, &lt; _v : int &gt; </span><span style="color:#319331">} </span><span style="color:#0F4A85">in</span></div>
<div class="m"></div>
<div class="m"><span style="color:#292929">    </span><span style="color:#0F4A85">let </span><span style="color:#292929">n_h =</span></div>
<div class="m"><span style="color:#292929">      sum</span><span style="color:#319331">(</span><span style="color:#292929">&lt;i,_v&gt; &lt;- range</span><span style="color:#7B3814">(</span><span style="color:#292929">nation.size</span><span style="color:#7B3814">)</span><span style="color:#319331">)</span></div>
<div class="m"><span style="color:#292929">        </span><span style="color:#0F4A85">if</span><span style="color:#319331">(</span><span style="color:#292929">dom</span><span style="color:#7B3814">(</span><span style="color:#292929">l_h</span><span style="color:#7B3814">)(</span><span style="color:#292929">nation.n_regionkey</span><span style="color:#0431FA">(</span><span style="color:#292929">i</span><span style="color:#0431FA">)</span><span style="color:#7B3814">)</span><span style="color:#319331">) </span><span style="color:#0F4A85">then</span></div>
<div class="m"><span style="color:#292929">          </span><span style="color:#319331">{ </span><span style="color:#292929">unique</span><span style="color:#7B3814">(</span><span style="color:#292929">nation.n_nationkey</span><span style="color:#0431FA">(</span><span style="color:#292929">i</span><span style="color:#0431FA">)</span><span style="color:#7B3814">) </span><span style="color:#292929">-&gt; nation.n_name</span><span style="color:#7B3814">(</span><span style="color:#292929">i</span><span style="color:#7B3814">) </span><span style="color:#319331">}</span></div>
<div class="m"><span style="color:#292929">        </span><span style="color:#0F4A85">else </span><span style="color:#319331">{}</span><span style="color:#292929">_</span><span style="color:#319331">{ </span><span style="color:#292929">int, string </span><span style="color:#319331">} </span><span style="color:#0F4A85">in</span></div>
<div class="m"></div>
<div class="m"><span style="color:#292929">    </span><span style="color:#0F4A85">let </span><span style="color:#292929">s_h =</span></div>
<div class="m"><span style="color:#292929">      sum</span><span style="color:#319331">(</span><span style="color:#292929">&lt;i,_v&gt; &lt;- range</span><span style="color:#7B3814">(</span><span style="color:#292929">supplier.size</span><span style="color:#7B3814">)</span><span style="color:#319331">)</span></div>
<div class="m"><span style="color:#292929">        </span><span style="color:#0F4A85">if</span><span style="color:#319331">(</span><span style="color:#292929">dom</span><span style="color:#7B3814">(</span><span style="color:#292929">n_h</span><span style="color:#7B3814">)(</span><span style="color:#292929">supplier.s_nationkey</span><span style="color:#0431FA">(</span><span style="color:#292929">i</span><span style="color:#0431FA">)</span><span style="color:#7B3814">)</span><span style="color:#319331">) </span><span style="color:#0F4A85">then</span></div>
<div class="m"><span style="color:#292929">          </span><span style="color:#319331">{</span></div>
<div class="m"><span style="color:#292929">            unique</span><span style="color:#7B3814">(</span><span style="color:#292929">supplier.s_suppkey</span><span style="color:#0431FA">(</span><span style="color:#292929">i</span><span style="color:#0431FA">)</span><span style="color:#7B3814">) </span><span style="color:#292929">-&gt;</span></div>
<div class="m"><span style="color:#292929">            &lt;</span></div>
<div class="m"><span style="color:#292929">              _1 = supplier.s_acctbal</span><span style="color:#7B3814">(</span><span style="color:#292929">i</span><span style="color:#7B3814">)</span><span style="color:#292929">,</span></div>
<div class="m"><span style="color:#292929">              _2 = supplier.s_name</span><span style="color:#7B3814">(</span><span style="color:#292929">i</span><span style="color:#7B3814">)</span><span style="color:#292929">,</span></div>
<div class="m"><span style="color:#292929">              _3 = n_h</span><span style="color:#7B3814">(</span><span style="color:#292929">supplier.s_nationkey</span><span style="color:#0431FA">(</span><span style="color:#292929">i</span><span style="color:#0431FA">)</span><span style="color:#7B3814">)</span><span style="color:#292929">,</span></div>
<div class="m"><span style="color:#292929">              _4 = supplier.s_address</span><span style="color:#7B3814">(</span><span style="color:#292929">i</span><span style="color:#7B3814">)</span><span style="color:#292929">,</span></div>
<div class="m"><span style="color:#292929">              _5 = supplier.s_phone</span><span style="color:#7B3814">(</span><span style="color:#292929">i</span><span style="color:#7B3814">)</span><span style="color:#292929">,</span></div>
<div class="m"><span style="color:#292929">              _6 = supplier.s_comment</span><span style="color:#7B3814">(</span><span style="color:#292929">i</span><span style="color:#7B3814">)</span></div>
<div class="m"><span style="color:#292929">            &gt;</span></div>
<div class="m"><span style="color:#292929">          </span><span style="color:#319331">}</span></div>
<div class="m"><span style="color:#292929">        </span><span style="color:#0F4A85">else </span><span style="color:#319331">{}</span><span style="color:#292929">_</span><span style="color:#319331">{ </span><span style="color:#292929">int, &lt; _1 : real, _2 : string, _3 : string, _4 : string, _5 : string, _6 : string &gt; </span><span style="color:#319331">} </span><span style="color:#0F4A85">in</span></div>
<div class="m"></div>
<div class="m"><span style="color:#292929">    </span><span style="color:#0F4A85">let </span><span style="color:#292929">p_h =</span></div>
<div class="m"><span style="color:#292929">      sum</span><span style="color:#319331">(</span><span style="color:#292929">&lt;i,_v&gt; &lt;- range</span><span style="color:#7B3814">(</span><span style="color:#292929">part.size</span><span style="color:#7B3814">)</span><span style="color:#319331">)</span></div>
<div class="m"><span style="color:#292929">        </span><span style="color:#0F4A85">if</span><span style="color:#319331">(</span><span style="color:#7B3814">(</span><span style="color:#292929">part.p_size</span><span style="color:#0431FA">(</span><span style="color:#292929">i</span><span style="color:#0431FA">) </span><span style="color:#292929">== </span><span style="color:#096d48">15</span><span style="color:#7B3814">) </span><span style="color:#292929">&amp;&amp; </span><span style="color:#7B3814">(</span><span style="color:#292929">endsWith</span><span style="color:#0431FA">(</span><span style="color:#292929">part.p_type</span><span style="color:#319331">(</span><span style="color:#292929">i</span><span style="color:#319331">)</span><span style="color:#292929">, </span><span style="color:#0F4A85">"BRASS"</span><span style="color:#0431FA">)</span><span style="color:#7B3814">)</span><span style="color:#319331">) </span><span style="color:#0F4A85">then</span></div>
<div class="m"><span style="color:#292929">          </span><span style="color:#319331">{ </span><span style="color:#292929">unique</span><span style="color:#7B3814">(</span><span style="color:#292929">part.p_partkey</span><span style="color:#0431FA">(</span><span style="color:#292929">i</span><span style="color:#0431FA">)</span><span style="color:#7B3814">) </span><span style="color:#292929">-&gt; &lt; _v = part.p_mfgr</span><span style="color:#7B3814">(</span><span style="color:#292929">i</span><span style="color:#7B3814">) </span><span style="color:#292929">&gt; </span><span style="color:#319331">}</span></div>
<div class="m"><span style="color:#292929">        </span><span style="color:#0F4A85">else </span><span style="color:#319331">{}</span><span style="color:#292929">_</span><span style="color:#319331">{ </span><span style="color:#292929">int, &lt; _v : string &gt; </span><span style="color:#319331">} </span><span style="color:#0F4A85">in</span></div>
<div class="m"></div>
<div class="m"><span style="color:#292929">    </span><span style="color:#0F4A85">let </span><span style="color:#292929">ps_h =</span></div>
<div class="m"><span style="color:#292929">      sum</span><span style="color:#319331">(</span><span style="color:#292929">&lt;i,_v&gt; &lt;- range</span><span style="color:#7B3814">(</span><span style="color:#292929">partsupp.size</span><span style="color:#7B3814">)</span><span style="color:#319331">)</span></div>
<div class="m"><span style="color:#292929">        </span><span style="color:#0F4A85">if</span><span style="color:#319331">(</span><span style="color:#7B3814">(</span><span style="color:#292929">dom</span><span style="color:#0431FA">(</span><span style="color:#292929">p_h</span><span style="color:#0431FA">)(</span><span style="color:#292929">partsupp.ps_partkey</span><span style="color:#319331">(</span><span style="color:#292929">i</span><span style="color:#319331">)</span><span style="color:#0431FA">)</span><span style="color:#7B3814">) </span><span style="color:#292929">&amp;&amp; </span><span style="color:#7B3814">(</span><span style="color:#292929">dom</span><span style="color:#0431FA">(</span><span style="color:#292929">s_h</span><span style="color:#0431FA">)(</span><span style="color:#292929">partsupp.ps_suppkey</span><span style="color:#319331">(</span><span style="color:#292929">i</span><span style="color:#319331">)</span><span style="color:#0431FA">)</span><span style="color:#7B3814">)</span><span style="color:#319331">) </span><span style="color:#0F4A85">then</span></div>
<div class="m"><span style="color:#292929">          </span><span style="color:#319331">{ </span><span style="color:#292929">partsupp.ps_partkey</span><span style="color:#7B3814">(</span><span style="color:#292929">i</span><span style="color:#7B3814">) </span><span style="color:#292929">-&gt; partsupp.ps_supplycost</span><span style="color:#7B3814">(</span><span style="color:#292929">i</span><span style="color:#7B3814">) </span><span style="color:#319331">}</span></div>
<div class="m"><span style="color:#292929">        </span><span style="color:#0F4A85">else </span><span style="color:#319331">{}</span><span style="color:#292929">_</span><span style="color:#319331">{ </span><span style="color:#292929">int, real </span><span style="color:#319331">} </span><span style="color:#0F4A85">in</span></div>
<div class="m"></div>
<div class="m"><span style="color:#292929">    sum</span><span style="color:#319331">(</span><span style="color:#292929">&lt;i,_v&gt; &lt;- range</span><span style="color:#7B3814">(</span><span style="color:#292929">partsupp.size</span><span style="color:#7B3814">)</span><span style="color:#319331">)</span></div>
<div class="m"><span style="color:#292929">      </span><span style="color:#0F4A85">if</span><span style="color:#319331">(</span></div>
<div class="m"><span style="color:#292929">        </span><span style="color:#7B3814">(</span><span style="color:#292929">dom</span><span style="color:#0431FA">(</span><span style="color:#292929">ps_h</span><span style="color:#0431FA">)(</span><span style="color:#292929">partsupp.ps_partkey</span><span style="color:#319331">(</span><span style="color:#292929">i</span><span style="color:#319331">)</span><span style="color:#0431FA">)</span><span style="color:#7B3814">)</span></div>
<div class="m"><span style="color:#292929">        &amp;&amp; </span><span style="color:#7B3814">(</span><span style="color:#292929">ps_h</span><span style="color:#0431FA">(</span><span style="color:#292929">partsupp.ps_partkey</span><span style="color:#319331">(</span><span style="color:#292929">i</span><span style="color:#319331">)</span><span style="color:#0431FA">) </span><span style="color:#292929">== partsupp.ps_supplycost</span><span style="color:#0431FA">(</span><span style="color:#292929">i</span><span style="color:#0431FA">)</span><span style="color:#7B3814">)</span></div>
<div class="m"><span style="color:#292929">        &amp;&amp; </span><span style="color:#7B3814">(</span><span style="color:#292929">dom</span><span style="color:#0431FA">(</span><span style="color:#292929">s_h</span><span style="color:#0431FA">)(</span><span style="color:#292929">partsupp.ps_suppkey</span><span style="color:#319331">(</span><span style="color:#292929">i</span><span style="color:#319331">)</span><span style="color:#0431FA">)</span><span style="color:#7B3814">)</span></div>
<div class="m"><span style="color:#292929">      </span><span style="color:#319331">) </span><span style="color:#0F4A85">then</span></div>
<div class="m"><span style="color:#292929">        </span><span style="color:#319331">{</span></div>
<div class="m"><span style="color:#292929">          unique</span><span style="color:#7B3814">(</span><span style="color:#292929">&lt;</span></div>
<div class="m"><span style="color:#292929">            _i = partsupp.ps_partkey</span><span style="color:#0431FA">(</span><span style="color:#292929">i</span><span style="color:#0431FA">)</span><span style="color:#292929">,</span></div>
<div class="m"><span style="color:#292929">            _r = s_h</span><span style="color:#0431FA">(</span><span style="color:#292929">partsupp.ps_suppkey</span><span style="color:#319331">(</span><span style="color:#292929">i</span><span style="color:#319331">)</span><span style="color:#0431FA">)</span><span style="color:#292929">._1,</span></div>
<div class="m"><span style="color:#292929">            _s1 = s_h</span><span style="color:#0431FA">(</span><span style="color:#292929">partsupp.ps_suppkey</span><span style="color:#319331">(</span><span style="color:#292929">i</span><span style="color:#319331">)</span><span style="color:#0431FA">)</span><span style="color:#292929">._2,</span></div>
<div class="m"><span style="color:#292929">            _s2 = s_h</span><span style="color:#0431FA">(</span><span style="color:#292929">partsupp.ps_suppkey</span><span style="color:#319331">(</span><span style="color:#292929">i</span><span style="color:#319331">)</span><span style="color:#0431FA">)</span><span style="color:#292929">._3,</span></div>
<div class="m"><span style="color:#292929">            _s3 = p_h</span><span style="color:#0431FA">(</span><span style="color:#292929">partsupp.ps_partkey</span><span style="color:#319331">(</span><span style="color:#292929">i</span><span style="color:#319331">)</span><span style="color:#0431FA">)</span><span style="color:#292929">._v,</span></div>
<div class="m"><span style="color:#292929">            _s4 = s_h</span><span style="color:#0431FA">(</span><span style="color:#292929">partsupp.ps_suppkey</span><span style="color:#319331">(</span><span style="color:#292929">i</span><span style="color:#319331">)</span><span style="color:#0431FA">)</span><span style="color:#292929">._4,</span></div>
<div class="m"><span style="color:#292929">            _s5 = s_h</span><span style="color:#0431FA">(</span><span style="color:#292929">partsupp.ps_suppkey</span><span style="color:#319331">(</span><span style="color:#292929">i</span><span style="color:#319331">)</span><span style="color:#0431FA">)</span><span style="color:#292929">._5,</span></div>
<div class="m"><span style="color:#292929">            _s6 = s_h</span><span style="color:#0431FA">(</span><span style="color:#292929">partsupp.ps_suppkey</span><span style="color:#319331">(</span><span style="color:#292929">i</span><span style="color:#319331">)</span><span style="color:#0431FA">)</span><span style="color:#292929">._6</span></div>
<div class="m"><span style="color:#292929">          &gt;</span><span style="color:#7B3814">) </span><span style="color:#292929">-&gt; true</span></div>
<div class="m"><span style="color:#292929">        </span><span style="color:#319331">}</span></div>
<div class="m"><span style="color:#292929">      </span><span style="color:#0F4A85">else </span><span style="color:#319331">{}</span><span style="color:#292929">_</span><span style="color:#319331">{ </span><span style="color:#292929">&lt; _i : int, _r : real, _s1 : string, _s2 : string, _s3 : string, _s4 : string, _s5 : string, _s6 : string &gt;, bool </span><span style="color:#319331">}</span></div>
<div class="m"><span style="color:#292929">  </span><span style="color:#0431FA">]</span></div>
<div class="m"></div>
<div class="m"><span style="color:#0F4A85">unsafe def </span><span style="color:#5e2cbc">Q02 </span><span style="color:#292929">: SProg := Q02_stub</span></div>
<div class="m"></div>
<div class="m"></div>
<div class="m"></div>
<div class="m"><span style="color:#0F4A85">end </span><span style="color:#292929">Tests.TPCH</span></div>
</div>
<div style="position:absolute;left:0;top:176px;width:101px;height:10px;background:rgba(255,204,0,0.38)"></div>
<div style="position:absolute;left:8px;top:176px;width:4px;height:2px;background:rgba(240,180,0,0.75)"></div>
<div style="position:absolute;left:8px;top:178px;width:8px;height:2px;background:rgba(240,180,0,0.75)"></div>
<div style="position:absolute;left:8px;top:180px;width:8px;height:2px;background:rgba(240,180,0,0.75)"></div>
<div style="position:absolute;left:8px;top:182px;width:6px;height:2px;background:rgba(240,180,0,0.75)"></div>
<div style="position:absolute;left:8px;top:184px;width:6px;height:2px;background:rgba(240,180,0,0.75)"></div>
<div style="position:absolute;left:0;top:314.4px;width:101px;height:1.5px;background:#8a8a8a"></div>
<div style="position:absolute;left:0;top:314.4px;width:6px;height:1.5px;background:#000"></div>
</div>
<div style="position:absolute;left:862px;top:5.2px;width:12.4px;height:908.8px;box-sizing:border-box;border-left:1px solid #b4b4b4;border-top:1px solid #a8a8a8"></div>
<div style="position:absolute;left:862px;top:308.4px;width:12px;height:225.4px;background:rgba(15,74,133,0.4)"></div>
<div style="position:absolute;left:871px;top:372px;width:3px;height:21px;background:#aca752"></div>
<div style="position:absolute;left:866px;top:386px;width:5px;height:3px;background:rgba(80,105,140,0.55)"></div>
<svg style="position:absolute;left:862px;top:380px" width="12" height="10" viewBox="0 0 12 10"><rect x="0.8" y="5" width="11.2" height="1.0" fill="#2c5f9b"/></svg>
<div style="position:absolute;left:871px;top:660px;width:3px;height:5px;background:#2b2b2b"></div>
<div style="position:absolute;left:874px;top:0;width:1px;height:914px;background:#0F4A85"></div>
<div id="info">
<div class="i" style="top:34px"><i style="color:#555;margin-right:2.5px">rep†</i> : SurfaceTy <svg style="display:inline-block;vertical-align:baseline;overflow:visible" width="6.995" height="10" viewBox="0 0 7 10"><path d="M0.2 6.4H6.2M3.9 3.5Q5.1 5.5 6.6 6.4Q5.1 7.3 3.9 9.3" fill="none" stroke="#2b2b2b" stroke-width="0.95"/></svg> Type</div>
<div class="i" style="top:50px"><b>part</b> : rep†</div>
<div class="i" style="top:66px">  ((fun i <svg style="display:inline-block;vertical-align:baseline;overflow:visible" width="6.995" height="10" viewBox="0 0 7 10"><path d="M0.55 5.2V9.6M0.55 7.4H5.6" fill="none" stroke="#2b2b2b" stroke-width="0.95"/><path d="M4.5 5.8L7 7.4L4.5 9Z" fill="#2b2b2b"/></svg></div>
<div class="i" style="top:82px">      #[record</div>
<div class="i" style="top:97px">            [("n_comment", «int».dict «string»), ("n_name", «int».dict «string»), ("n_nationkey", «int».dict «int»),</div>
<div class="i" style="top:113px">              ("n_regionkey", «int».dict «int»), ("size", «int»)],</div>
<div class="i" style="top:129px">          record</div>
<div class="i" style="top:145px">            [("p_brand", «int».dict «string»), ("p_comment", «int».dict «string»), ("p_container", «int».dict «string»),</div>
<div class="i" style="top:161px">              ("p_mfgr", «int».dict «string»), ("p_name", «int».dict «string»), ("p_partkey", «int».dict «int»),</div>
<div class="i" style="top:177px">              ("p_retailprice", «int».dict «real»), ("p_size", «int».dict «int»), ("p_type", «int».dict «string»),</div>
<div class="i" style="top:192px">              ("size", «int»)],</div>
<div class="i" style="top:208px">          record</div>
<div class="i" style="top:224px">            [("ps_availqty", «int».dict «real»), ("ps_comment", «int».dict «string»), ("ps_partkey", «int».dict «int»),</div>
<div class="i" style="top:240px">              ("ps_suppkey", «int».dict «int»), ("ps_supplycost", «int».dict «real»), ("size", «int»)],</div>
<div class="i" style="top:256px">          record</div>
<div class="i" style="top:272px">            [("r_comment", «int».dict «string»), ("r_name", «int».dict «string»), ("r_regionkey", «int».dict «int»),</div>
<div class="i" style="top:287px">              ("size", «int»)],</div>
<div class="i" style="top:303px">          record</div>
<div class="i" style="top:319px">            [("s_acctbal", «int».dict «real»), ("s_address", «int».dict «string»), ("s_comment", «int».dict «string»),</div>
<div class="i" style="top:335px">              ("s_name", «int».dict «string»), ("s_nationkey", «int».dict «int»), ("s_phone", «int».dict «string»),</div>
<div class="i" style="top:351px">              ("s_suppkey", «int».dict «int»), ("size", «int»)]][<svg style="display:inline-block;vertical-align:baseline;overflow:visible" width="6.995" height="10" viewBox="0 0 7 10"><path d="M3.3 1.7V9.9M0.5 5Q2.5 3.7 3.3 1.5Q4.1 3.7 6.1 5" fill="none" stroke="#2b2b2b" stroke-width="0.95"/></svg>i]!)</div>
<div class="i" style="top:367px">    1)</div>
<div class="i" style="top:382px"><b>supplier</b> : rep†</div>
<div class="i" style="top:398px">  ((fun i <svg style="display:inline-block;vertical-align:baseline;overflow:visible" width="6.995" height="10" viewBox="0 0 7 10"><path d="M0.55 5.2V9.6M0.55 7.4H5.6" fill="none" stroke="#2b2b2b" stroke-width="0.95"/><path d="M4.5 5.8L7 7.4L4.5 9Z" fill="#2b2b2b"/></svg></div>
<div class="i" style="top:414px">      #[record</div>
<div class="i" style="top:430px">            [("n_comment", «int».dict «string»), ("n_name", «int».dict «string»), ("n_nationkey", «int».dict «int»),</div>
<div class="i" style="top:446px">              ("n_regionkey", «int».dict «int»), ("size", «int»)],</div>
<div class="i" style="top:462px">          record</div>
<div class="i" style="top:477px">            [("p_brand", «int».dict «string»), ("p_comment", «int».dict «string»), ("p_container", «int».dict «string»),</div>
<div class="i" style="top:493px">              ("p_mfgr", «int».dict «string»), ("p_name", «int».dict «string»), ("p_partkey", «int».dict «int»),</div>
<div class="i" style="top:509px">              ("p_retailprice", «int».dict «real»), ("p_size", «int».dict «int»), ("p_type", «int».dict «string»),</div>
<div class="i" style="top:525px">              ("size", «int»)],</div>
<div class="i" style="top:541px">          record</div>
<div class="i" style="top:557px">            [("ps_availqty", «int».dict «real»), ("ps_comment", «int».dict «string»), ("ps_partkey", «int».dict «int»),</div>
<div class="i" style="top:572px">              ("ps_suppkey", «int».dict «int»), ("ps_supplycost", «int».dict «real»), ("size", «int»)],</div>
<div class="i" style="top:588px">          record</div>
<div class="i" style="top:604px">            [("r_comment", «int».dict «string»), ("r_name", «int».dict «string»), ("r_regionkey", «int».dict «int»),</div>
<div class="i" style="top:620px">              ("size", «int»)],</div>
<div class="i" style="top:636px">          record</div>
<div class="i" style="top:652px">            [("s_acctbal", «int».dict «real»), ("s_address", «int».dict «string»), ("s_comment", «int».dict «string»),</div>
<div class="i" style="top:667px">              ("s_name", «int».dict «string»), ("s_nationkey", «int».dict «int»), ("s_phone", «int».dict «string»),</div>
<div class="i" style="top:683px">              ("s_suppkey", «int».dict «int»), ("size", «int»)]][<svg style="display:inline-block;vertical-align:baseline;overflow:visible" width="6.995" height="10" viewBox="0 0 7 10"><path d="M3.3 1.7V9.9M0.5 5Q2.5 3.7 3.3 1.5Q4.1 3.7 6.1 5" fill="none" stroke="#2b2b2b" stroke-width="0.95"/></svg>i]!)</div>
<div class="i" style="top:699px">    4)</div>
<div class="i" style="top:715px"><b>partsupp</b> : rep†</div>
<div class="i" style="top:731px">  ((fun i <svg style="display:inline-block;vertical-align:baseline;overflow:visible" width="6.995" height="10" viewBox="0 0 7 10"><path d="M0.55 5.2V9.6M0.55 7.4H5.6" fill="none" stroke="#2b2b2b" stroke-width="0.95"/><path d="M4.5 5.8L7 7.4L4.5 9Z" fill="#2b2b2b"/></svg></div>
<div class="i" style="top:747px">      #[record</div>
<div class="i" style="top:762px">            [("n_comment", «int».dict «string»), ("n_name", «int».dict «string»), ("n_nationkey", «int».dict «int»),</div>
<div class="i" style="top:778px">              ("n_regionkey", «int».dict «int»), ("size", «int»)],</div>
<div class="i" style="top:794px">          record</div>
<div class="i" style="top:810px">            [("p_brand", «int».dict «string»), ("p_comment", «int».dict «string»), ("p_container", «int».dict «string»),</div>
<div class="i" style="top:826px">              ("p_mfgr", «int».dict «string»), ("p_name", «int».dict «string»), ("p_partkey", «int».dict «int»),</div>
<div class="i" style="top:842px">              ("p_retailprice", «int».dict «real»), ("p_size", «int».dict «int»), ("p_type", «int».dict «string»),</div>
<div class="i" style="top:857px">              ("size", «int»)],</div>
<div class="i" style="top:873px">          record</div>
<div class="i" style="top:889px">            [("ps_availqty", «int».dict «real»), ("ps_comment", «int».dict «string»), ("ps_partkey", «int».dict «int»),</div>
<div class="i" style="top:905px">              ("ps_suppkey", «int».dict «int»), ("ps_supplycost", «int».dict «real»), ("size", «int»)],</div>
<svg style="position:absolute;left:0;top:0" width="60" height="30" viewBox="0 0 60 30"><path d="M21 14.9H29L25 21.3Z" fill="#222"/></svg>
<div style="position:absolute;left:34.4px;top:11px;transform-origin:0 0;transform:scaleX(0.955);font-family:'Liberation Sans',sans-serif;font-size:11.1px;line-height:15px;color:#2b2b2b;white-space:pre">Expected type</div>
<div style="position:absolute;left:30.6px;top:-7.6px;font-family:'Liberation Sans',sans-serif;font-size:10.3px;line-height:15px;color:#2b2b2b;white-space:pre">Q02.lean:92:9</div>
<svg style="position:absolute;left:0;top:0" width="40" height="6" viewBox="0 0 40 6"><path d="M14.8 -3H20.2L17.5 2.8Z" fill="#222"/></svg>
<svg style="position:absolute;left:868px;top:13.9px;overflow:visible" width="13" height="12" viewBox="0 0 13 12"><path d="M4.9,0.2C2,1.6 0.2,4.8 0.2,8C0.2,9.9 1.3,11.2 2.8,11.2C4.2,11.2 5.3,10.1 5.3,8.7C5.3,7.3 4.3,6.3 3,6.3C2.8,6.3 2.5,6.35 2.3,6.4C2.8,4.4 3.8,2.4 5.4,1.1Z" fill="#0F4A85"/><path d="M4.9,0.2C2,1.6 0.2,4.8 0.2,8C0.2,9.9 1.3,11.2 2.8,11.2C4.2,11.2 5.3,10.1 5.3,8.7C5.3,7.3 4.3,6.3 3,6.3C2.8,6.3 2.5,6.35 2.3,6.4C2.8,4.4 3.8,2.4 5.4,1.1Z" fill="#0F4A85" transform="translate(6.2,0)"/></svg>
<svg style="position:absolute;left:867px;top:-8px" width="14" height="14" viewBox="0 0 14 14"><path d="M2 8.4H5.4L6.1 12.3L8.6 10.6H12.6V8" fill="none" stroke="#0F4A85" stroke-width="1.1"/></svg>
<div style="position:absolute;left:874px;top:884.2px;width:30px;height:21.6px;background:#0F4A85;border-radius:2px"></div>
<div style="position:absolute;left:886.8px;top:887px;font-family:'Liberation Sans',sans-serif;font-size:10.8px;line-height:16px;color:#fff">R</div>
</div>
</div></body></html>
